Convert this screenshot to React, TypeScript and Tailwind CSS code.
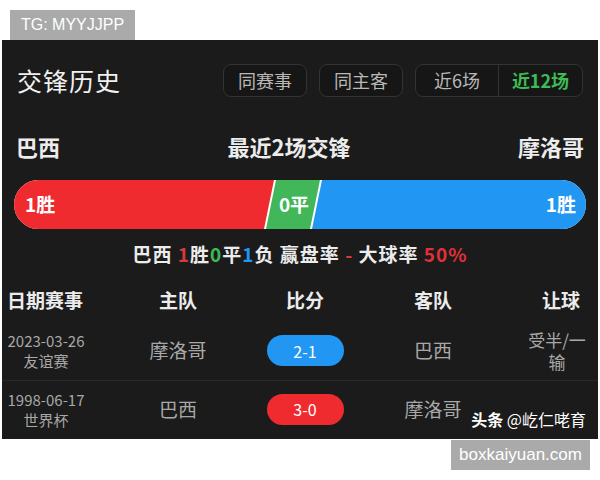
const cjk = "font-['Noto_Sans_CJK_SC','Noto_Sans',sans-serif]";

type Match = {
  date: string;
  event: string;
  home: string;
  score: string;
  scoreColor: string;
  away: string;
  handicap: string[];
};

const matches: Match[] = [
  {
    date: "2023-03-26",
    event: "友谊赛",
    home: "摩洛哥",
    score: "2-1",
    scoreColor: "bg-[#2196f3]",
    away: "巴西",
    handicap: ["受半/一", "输"],
  },
  {
    date: "1998-06-17",
    event: "世界杯",
    home: "巴西",
    score: "3-0",
    scoreColor: "bg-[#ef2b30]",
    away: "摩洛哥",
    handicap: [],
  },
];

const cols = "grid grid-cols-[90px_172px_82px_174px_1fr] items-center";

function Tag({ children, className }: { children: React.ReactNode; className?: string }) {
  return (
    <div
      className={`h-[30px] bg-[#aaaaaa] text-white text-[16px] font-['Liberation_Sans',sans-serif] flex items-center justify-center ${className ?? ""}`}
    >
      {children}
    </div>
  );
}

export default function App() {
  return (
    <div className={`w-[600px] h-[480px] bg-white overflow-hidden ${cjk}`}>
      <Tag className="ml-[10px] mt-[10px] w-[125px]">TG: MYYJJPP</Tag>

      <div className="ml-[2px] w-[596px] h-[399px] bg-[#1b1b1b] text-[#ececec]">
        {/* header */}
        <div className="flex items-center pt-[24px] pl-[15px] pr-[15px]">
          <h1 className="text-[25px] leading-none tracking-[1px] text-[#f0f0f0]">交锋历史</h1>
          <div className="ml-auto flex gap-[12px] text-[18px] text-[#b8b8b8]">
            <div className="h-[33px] w-[84px] rounded-[8px] border border-[#333] bg-[#161616] flex items-center justify-center">
              同赛事
            </div>
            <div className="h-[33px] w-[84px] rounded-[8px] border border-[#333] bg-[#161616] flex items-center justify-center">
              同主客
            </div>
            <div className="h-[33px] w-[168px] rounded-[8px] border border-[#333] bg-[#161616] flex">
              <div className="w-[83px] flex items-center justify-center border-r border-[#333]">近6场</div>
              <div className="flex-1 flex items-center justify-center font-bold text-[#3dbb55]">近12场</div>
            </div>
          </div>
        </div>

        {/* teams */}
        <div className="flex items-center justify-between mt-[38px] px-[14px] text-[22px] font-bold leading-none">
          <span>巴西</span>
          <span>最近2场交锋</span>
          <span>摩洛哥</span>
        </div>

        {/* result bar */}
        <div className="mt-[23px] mx-[12px] h-[49px] rounded-full overflow-hidden bg-white flex text-white font-bold text-[19px]">
          <div className="w-[260px] bg-[#ef2b30] flex items-center pl-[11px] [clip-path:polygon(0_0,100%_0,calc(100%-10px)_100%,0_100%)]">
            1胜
          </div>
          <div className="ml-[-8px] w-[54px] bg-[#42b75a] flex items-center justify-center pl-[2px] [clip-path:polygon(10px_0,100%_0,calc(100%-10px)_100%,0_100%)]">
            0平
          </div>
          <div className="ml-[-8px] flex-1 bg-[#2196f3] flex items-center justify-end pr-[10px] [clip-path:polygon(10px_0,100%_0,100%_100%,0_100%)]">
            1胜
          </div>
        </div>

        {/* summary */}
        <div className="mt-[15px] text-center text-[19px] font-bold leading-none tracking-[1px] whitespace-pre">
          {"巴西 "}
          <span className="text-[#d23a3c]">1</span>胜<span className="text-[#3dbb55]">0</span>平
          <span className="text-[#2196f3]">1</span>
          {"负 赢盘率 "}
          <span className="text-[#d23a3c]">-</span>
          {" 大球率 "}
          <span className="text-[#e0303a]">50%</span>
        </div>

        {/* table */}
        <div className={`${cols} h-[42px] mt-[16px] text-[19px] font-bold`}>
          <div className="text-left pl-[5px]">日期赛事</div>
          <div className="text-center">主队</div>
          <div className="text-center">比分</div>
          <div className="text-center">客队</div>
          <div className="text-right pr-[18px]">让球</div>
        </div>

        {matches.map((m, i) => (
          <div
            key={m.date}
            className={`${cols} ${i === 0 ? "h-[60px] border-b border-[#2a2a2a]" : "h-[56px]"} text-[#a8a8a8] relative`}
          >
            <div className="flex flex-col items-center gap-[1px] text-[15px] leading-[19px] pr-[2px]">
              <div>{m.date}</div>
              <div>{m.event}</div>
            </div>
            <div className="text-center text-[19px]">{m.home}</div>
            <div className="flex justify-center">
              <div
                className={`${m.scoreColor} w-[77px] h-[31px] rounded-full text-white text-[16px] flex items-center justify-center`}
              >
                {m.score}
              </div>
            </div>
            <div className="text-center text-[19px]">{m.away}</div>
            <div className="flex flex-col items-center gap-[2px] text-[17px] leading-[20px] pr-[4px]">
              {m.handicap.map((h) => (
                <div key={h}>{h}</div>
              ))}
            </div>
            {i === 1 && (
              <div className="absolute right-[12px] bottom-[10px] text-white text-[16px] leading-none">
                <span className="font-bold">头条</span> @屹仁咾育
              </div>
            )}
          </div>
        ))}
      </div>

      <Tag className="ml-[451px] mt-[1px] w-[139px] text-[17px]">boxkaiyuan.com</Tag>
    </div>
  );
}
